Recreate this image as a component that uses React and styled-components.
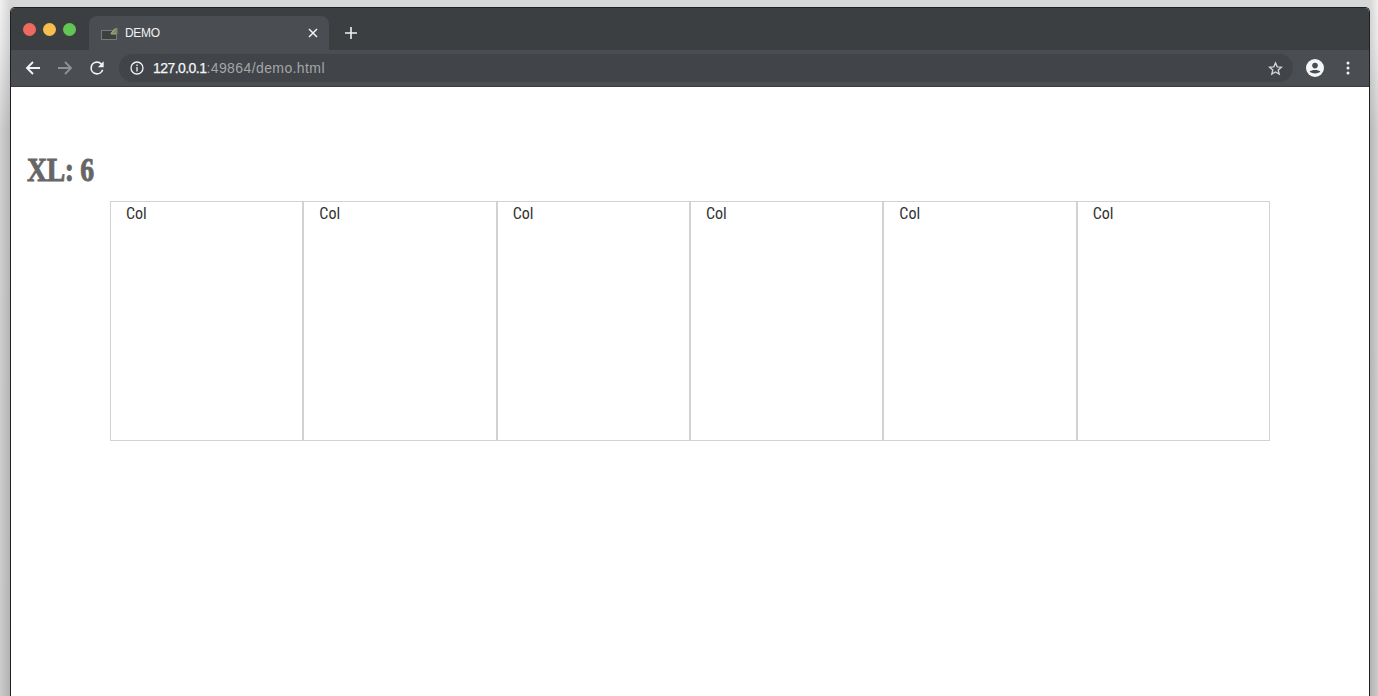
import styled, { createGlobalStyle } from 'styled-components';

const GlobalStyle = createGlobalStyle`
  html, body {
    margin: 0;
    padding: 0;
    height: 100%;
    overflow: hidden;
    font-family: "Liberation Sans", Arial, sans-serif;
  }
  #root {
    height: 100%;
  }
`;

const Desktop = styled.div`
  height: 696px;
  box-sizing: border-box;
  padding: 7px 8px 0 10px;
  background:
    linear-gradient(90deg, rgba(255, 255, 255, 0.1) 0, rgba(0, 0, 0, 0.1) 10px, rgba(0, 0, 0, 0.1) 1370px, rgba(255, 255, 255, 0.1) 100%),
    linear-gradient(180deg, #efefef 0, #e8e8e8 40px, #cbcbcb 130px, #c6c6c6 100%);
  overflow: hidden;
`;

const Window = styled.div`
  height: 100%;
  box-sizing: border-box;
  border: 1px solid #1f2022;
  border-bottom: 0;
  border-radius: 5px 5px 0 0;
  background: #fff;
  overflow: hidden;
`;

const TabStrip = styled.div`
  height: 42px;
  display: flex;
  align-items: flex-end;
  background: #3c3f41;
`;

const Lights = styled.div`
  width: 78px;
  height: 100%;
  display: flex;
  align-items: flex-start;
  gap: 7px;
  padding: 15px 0 0 12px;
  box-sizing: border-box;
`;

const Light = styled.span`
  width: 13px;
  height: 13px;
  border-radius: 50%;
  background: ${(p) => p.$color};
`;

const Tab = styled.div`
  width: 240px;
  height: 34px;
  display: flex;
  align-items: center;
  padding: 0 11px 0 12px;
  box-sizing: border-box;
  background: #4a4d52;
  border-radius: 8px 8px 0 0;
  color: #f2f2f2;
  font-size: 12px;
  letter-spacing: -0.3px;
`;

const TabTitle = styled.span`
  flex: 1;
  margin-left: 7px;
`;

const NewTab = styled.div`
  margin: 0 0 11px 16px;
  display: flex;
`;

const Toolbar = styled.div`
  height: 36px;
  display: flex;
  align-items: center;
  background: #4a4d52;
  border-bottom: 1px solid #3a3c3f;
  box-sizing: content-box;
`;

const NavButton = styled.div`
  width: 32px;
  display: flex;
  justify-content: center;
  align-items: center;
`;

const NavGroup = styled.div`
  display: flex;
  padding-left: 6px;
`;

const Omnibox = styled.div`
  flex: 1;
  height: 28px;
  margin-left: 6px;
  display: flex;
  align-items: center;
  padding: 0 10px 0 11px;
  box-sizing: border-box;
  background: #414448;
  border-radius: 14px;
  font-size: 14px;
`;

const Host = styled.span`
  margin-left: 9px;
  color: #f4f4f4;
  letter-spacing: -0.55px;
  -webkit-text-stroke: 0.25px #f4f4f4;
`;

const Path = styled.span`
  flex: 1;
  color: #a4a6a9;
  letter-spacing: 0.4px;
`;

const ToolbarEnd = styled.div`
  display: flex;
  align-items: center;
  gap: 1px;
  margin-left: 6px;
  padding-right: 5px;
`;

const Page = styled.main`
  padding: 65px 16px 0;
`;

const Heading = styled.h1`
  margin: 0 0 13px;
  color: #666;
  font-family: "Liberation Serif", serif;
  font-size: 33px;
  line-height: 36px;
  font-weight: 700;
  letter-spacing: -0.4px;
  -webkit-text-stroke: 0.9px #666;
  transform: scaleX(0.84);
  transform-origin: left center;
`;

const Grid = styled.div`
  width: 1160px;
  margin-left: 83px;
  display: grid;
  grid-template-columns: repeat(6, 1fr);
`;

const Col = styled.div`
  height: 240px;
  box-sizing: border-box;
  padding: 0 15px;
  border: 1px solid #d2d2d2;
  color: #333;
  font-family: Roboto, "Liberation Sans", sans-serif;
  font-size: 16px;
  line-height: 24px;
  font-stretch: 75%;
`;

const Favicon = () => (
  <svg width="17" height="13" viewBox="0 0 17 13" fill="none">
    <rect x="0.5" y="3.5" width="15" height="9" fill="#3d3f41" stroke="#77797b" />
    <path d="M9 7 L14 1 H16.5 V7 Z" fill="#7d8a68" />
    <path d="M10 7 H15 M14 2 L10.5 6" stroke="#a5b08e" />
  </svg>
);

const CloseIcon = () => (
  <svg width="10" height="10" viewBox="0 0 10 10" stroke="#f2f2f2" strokeWidth="1.5">
    <path d="M1 1 L9 9 M9 1 L1 9" />
  </svg>
);

const PlusIcon = () => (
  <svg width="12" height="12" viewBox="0 0 12 12" stroke="#f2f2f2" strokeWidth="1.6">
    <path d="M6 0 V12 M0 6 H12" />
  </svg>
);

const ArrowIcon = ({ color, flip }) => (
  <svg
    width="16"
    height="16"
    viewBox="0 0 16 16"
    fill="none"
    stroke={color}
    strokeWidth="1.9"
    style={flip ? { transform: 'scaleX(-1)' } : undefined}
  >
    <path d="M15 8 H2 M8 2 L2 8 L8 14" />
  </svg>
);

const ReloadIcon = () => (
  <svg width="20" height="20" viewBox="0 0 24 24" fill="#f4f4f4">
    <path d="M17.65 6.35A7.96 7.96 0 0 0 12 4a8 8 0 1 0 7.73 10h-2.08A6 6 0 1 1 12 6c1.66 0 3.14.69 4.22 1.78L13 11h7V4l-2.35 2.35z" />
  </svg>
);

const InfoIcon = () => (
  <svg width="14" height="14" viewBox="0 0 14 14" fill="none" stroke="#f4f4f4" strokeWidth="1.3">
    <circle cx="7" cy="7" r="6" />
    <path d="M7 6 V10.5 M7 3.4 V4.9" />
  </svg>
);

const StarIcon = () => (
  <svg width="15" height="15" viewBox="0 0 24 24" fill="none" stroke="#d4d4d4" strokeWidth="2.2">
    <path d="M12 3 L14.7 9.3 L21.5 9.9 L16.3 14.4 L17.9 21 L12 17.5 L6.1 21 L7.7 14.4 L2.5 9.9 L9.3 9.3 Z" />
  </svg>
);

const AccountIcon = () => (
  <svg width="18" height="18" viewBox="0 0 18 18">
    <circle cx="9" cy="9" r="9" fill="#f6f6f6" />
    <circle cx="9" cy="6.6" r="2.8" fill="#4a4d52" />
    <path d="M3.6 12.6 C5 10.4 13 10.4 14.4 12.6 C13 15 5 15 3.6 12.6 Z" fill="#4a4d52" />
  </svg>
);

const MenuIcon = () => (
  <svg width="4" height="14" viewBox="0 0 4 14" fill="#f4f4f4">
    <circle cx="2" cy="2" r="1.5" />
    <circle cx="2" cy="7" r="1.5" />
    <circle cx="2" cy="12" r="1.5" />
  </svg>
);

const columns = [1, 2, 3, 4, 5, 6];

function App() {
  return (
    <Desktop>
      <GlobalStyle />
      <Window>
        <TabStrip>
          <Lights>
            <Light $color="#ee6a5f" />
            <Light $color="#f5be4f" />
            <Light $color="#62c554" />
          </Lights>
          <Tab>
            <Favicon />
            <TabTitle>DEMO</TabTitle>
            <CloseIcon />
          </Tab>
          <NewTab>
            <PlusIcon />
          </NewTab>
        </TabStrip>
        <Toolbar>
          <NavGroup>
            <NavButton><ArrowIcon color="#f4f4f4" /></NavButton>
            <NavButton><ArrowIcon color="#8f9194" flip /></NavButton>
            <NavButton><ReloadIcon /></NavButton>
          </NavGroup>
          <Omnibox>
            <InfoIcon />
            <Host>127.0.0.1</Host>
            <Path>:49864/demo.html</Path>
            <StarIcon />
          </Omnibox>
          <ToolbarEnd>
            <NavButton><AccountIcon /></NavButton>
            <NavButton><MenuIcon /></NavButton>
          </ToolbarEnd>
        </Toolbar>
        <Page>
          <Heading>XL: 6</Heading>
          <Grid>
            {columns.map((n) => (
              <Col key={n}>Col</Col>
            ))}
          </Grid>
        </Page>
      </Window>
    </Desktop>
  );
}

export default App;
